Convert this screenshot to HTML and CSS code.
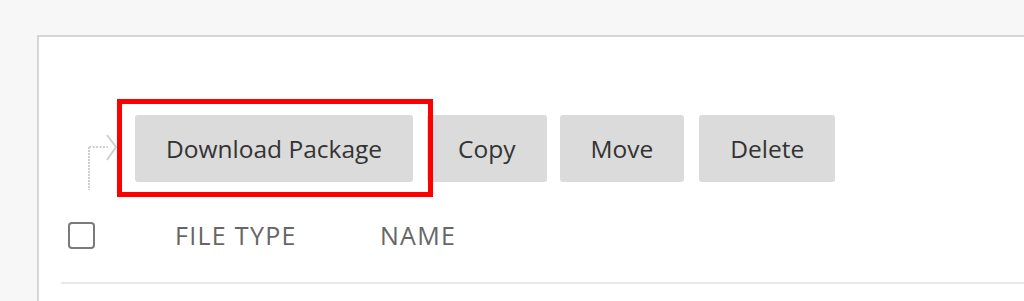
FILE: index.html
```html
<!DOCTYPE html>
<html>

<head>
  <meta charset="UTF-8" />
  <title>Files</title>
  <link rel="stylesheet" href="styles.css">
</head>

<body>
  <div class="panel">
    <!-- Bulk actions -->
    <div class="toolbar">
      <svg class="select-arrow" width="29" height="98" viewBox="0 0 29 98">
        <line x1="1" y1="48" x2="1" y2="91" stroke="#cfcfcf" stroke-width="2" stroke-dasharray="2 1" />
        <line x1="1" y1="48" x2="20" y2="48" stroke="#cfcfcf" stroke-width="2" stroke-dasharray="2 1.5" />
        <polyline points="19,36 28,48 19,61" fill="none" stroke="#cfcfcf" stroke-width="2" />
      </svg>
      <div class="highlight">
        <button id="downloadBtn">Download Package</button>
      </div>
      <div class="actions">
        <button id="copyBtn">Copy</button>
        <button id="moveBtn">Move</button>
        <button id="deleteBtn">Delete</button>
      </div>
    </div>

    <!-- Table header -->
    <div class="table-head">
      <span class="checkbox"></span>
      <span class="col col-type">FILE TYPE</span>
      <span class="col col-name">NAME</span>
    </div>
  </div>
</body>

</html>
```

FILE: styles.css
```css
body {
  font-family: "Open Sans", "Liberation Sans", sans-serif;
  margin: 0;
  background-color: #f7f7f7;
  color: #333;
  overflow: hidden;
  height: 301px;
}

.panel {
  margin: 35px 0 0 37px;
  padding: 62px 0 0 22px;
  height: 202px;
  background-color: white;
  border-top: 2px solid #d6d6d6;
  border-left: 2px solid #d6d6d6;
}

.toolbar {
  display: flex;
  align-items: flex-start;
  padding-left: 27px;
}

.select-arrow {
  display: block;
  flex-shrink: 0;
}

.highlight {
  border: 5px solid #ff0000;
  padding: 11px 15px 10px 13px;
  position: relative;
  z-index: 1;
}

.actions {
  display: flex;
  gap: 13px;
  margin-top: 16px;
  margin-left: -6px;
}

button {
  font-family: "Open Sans", "Liberation Sans", sans-serif;
  background-color: #dbdbdb;
  color: #333;
  border: none;
  height: 67px;
  padding: 0 31px;
  font-size: 24.5px;
  border-radius: 3px;
  display: block;
}

#deleteBtn {
  margin-left: 2px;
}

.table-head {
  display: flex;
  align-items: center;
  padding: 21px 0 30px 7px;
  border-bottom: 2px solid #e8e8e8;
}

.checkbox {
  width: 23px;
  height: 23px;
  border: 2px solid #7a7a7a;
  border-radius: 4px;
  margin-right: 80px;
}

.col {
  font-size: 25px;
  letter-spacing: 1.3px;
  color: #666;
}

.col-type {
  width: 205px;
}
```
